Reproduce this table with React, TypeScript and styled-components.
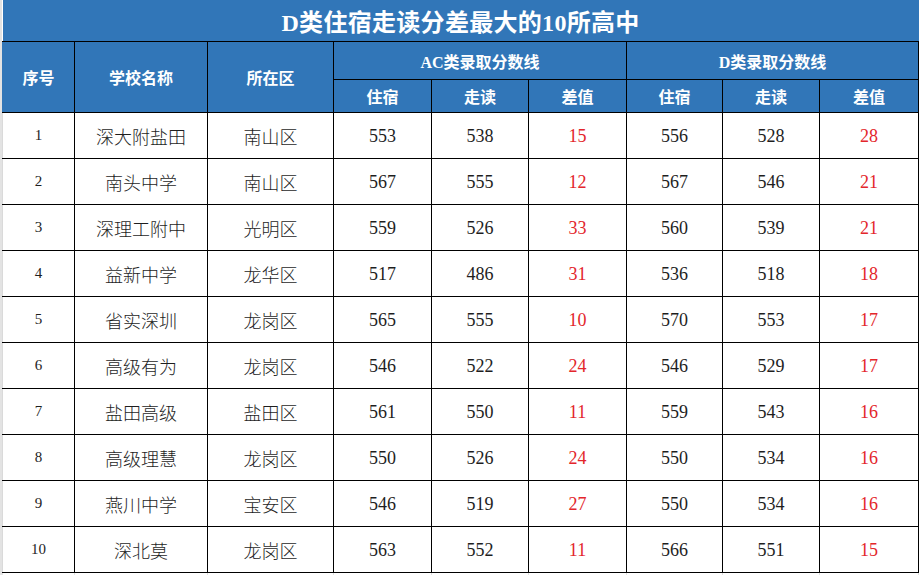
import React from 'react';
import styled, { createGlobalStyle } from 'styled-components';

const GlobalStyle = createGlobalStyle`
  html, body {
    margin: 0;
    padding: 0;
    background: #ffffff;
  }
  body {
    width: 920px;
    height: 575px;
    overflow: hidden;
    font-family: "Liberation Serif", "Noto Sans CJK SC", serif;
  }
`;

const Page = styled.div`
  width: 920px;
  height: 575px;
  border-left: 2px solid #e3e3e3;
  box-sizing: border-box;
  background: #ffffff;
`;

const Sheet = styled.table`
  width: 916px;
  table-layout: fixed;
  border-collapse: collapse;
  border-spacing: 0;
`;

const Title = styled.td`
  height: 41px;
  padding: 0;
  background: #3176b8;
  color: #ffffff;
  font-size: 24px;
  font-weight: bold;
  text-align: center;
  vertical-align: middle;
  border-bottom: 1px solid #000;
  letter-spacing: 0.3px;
`;

const Head = styled.th<{ $first?: boolean }>`
  padding: 0;
  background: #3176b8;
  color: #ffffff;
  font-size: 16px;
  font-weight: bold;
  text-align: center;
  vertical-align: middle;
  border: 1px solid #000;
  border-left: ${(p) => (p.$first ? '1px solid #3176b8' : '1px solid #000')};
`;

const Cell = styled.td<{ $red?: boolean; $first?: boolean; $num?: boolean }>`
  height: ${(p) => (p.$num ? '43px' : '45px')};
  padding: ${(p) => (p.$num ? '2px 0 0' : '0')};
  text-align: center;
  vertical-align: middle;
  font-size: ${(p) => (p.$first ? '15px' : '18px')};
  font-weight: ${(p) => (p.$first ? 400 : 300)};
  color: ${(p) => (p.$red ? '#e3262b' : '#1e1e1e')};
  border: 1px solid #000;
  border-left: ${(p) => (p.$first ? '1px solid #dadada' : '1px solid #000')};
`;

const Filler = styled.td`
  height: 4px;
  padding: 0;
  border-left: 1px solid #e2e2e2;
  border-right: 1px solid #e2e2e2;
`;

const widths = [72, 133, 126, 98, 97, 98, 96, 97, 99];

const rows = [
  ['1', '深大附盐田', '南山区', 553, 538, 15, 556, 528, 28],
  ['2', '南头中学', '南山区', 567, 555, 12, 567, 546, 21],
  ['3', '深理工附中', '光明区', 559, 526, 33, 560, 539, 21],
  ['4', '益新中学', '龙华区', 517, 486, 31, 536, 518, 18],
  ['5', '省实深圳', '龙岗区', 565, 555, 10, 570, 553, 17],
  ['6', '高级有为', '龙岗区', 546, 522, 24, 546, 529, 17],
  ['7', '盐田高级', '盐田区', 561, 550, 11, 559, 543, 16],
  ['8', '高级理慧', '龙岗区', 550, 526, 24, 550, 534, 16],
  ['9', '燕川中学', '宝安区', 546, 519, 27, 550, 534, 16],
  ['10', '深北莫', '龙岗区', 563, 552, 11, 566, 551, 15],
];

const App: React.FC = () => {
  return (
    <Page>
      <GlobalStyle />
      <Sheet>
        <colgroup>
          {widths.map((w, i) => (
            <col key={i} style={{ width: w }} />
          ))}
        </colgroup>
        <thead>
          <tr>
            <Title colSpan={9}>D类住宿走读分差最大的10所高中</Title>
          </tr>
          <tr style={{ height: 38 }}>
            <Head $first rowSpan={2}>序号</Head>
            <Head rowSpan={2}>学校名称</Head>
            <Head rowSpan={2}>所在区</Head>
            <Head colSpan={3}>AC类录取分数线</Head>
            <Head colSpan={3}>D类录取分数线</Head>
          </tr>
          <tr style={{ height: 33 }}>
            <Head>住宿</Head>
            <Head>走读</Head>
            <Head>差值</Head>
            <Head>住宿</Head>
            <Head>走读</Head>
            <Head>差值</Head>
          </tr>
        </thead>
        <tbody>
          {rows.map((r) => (
            <tr key={r[0]}>
              {r.map((v, i) => (
                <Cell
                  key={i}
                  $first={i === 0}
                  $num={typeof v === 'number'}
                  $red={i === 5 || i === 8}
                >
                  {v}
                </Cell>
              ))}
            </tr>
          ))}
          <tr>
            {widths.map((_, i) => (
              <Filler key={i} />
            ))}
          </tr>
        </tbody>
      </Sheet>
    </Page>
  );
};

export default App;
